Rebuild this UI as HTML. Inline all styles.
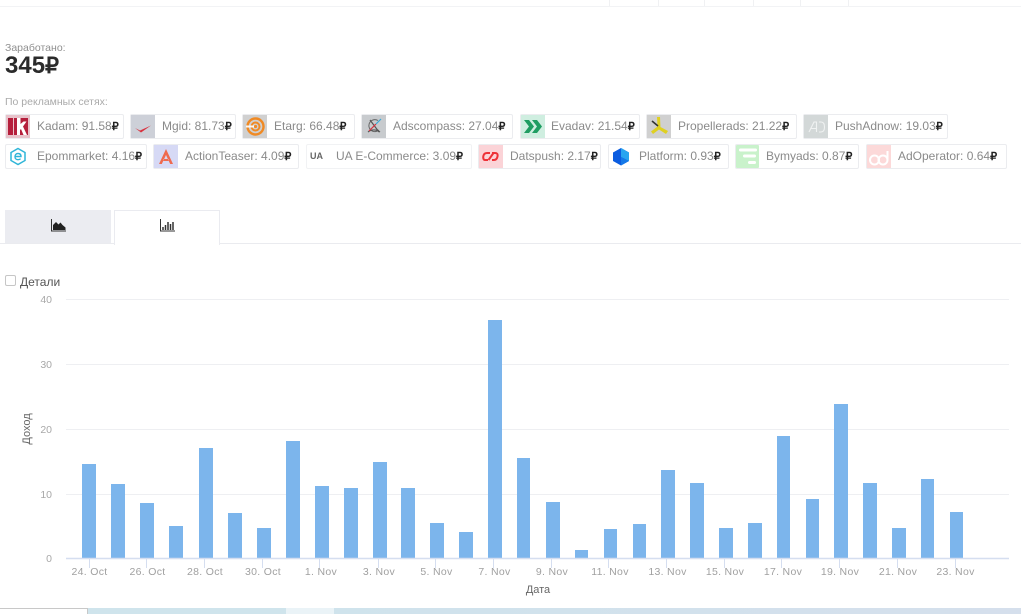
<!DOCTYPE html>
<html><head><meta charset="utf-8"><style>
html,body{margin:0;padding:0;background:#fff}
body{width:1021px;height:614px;position:relative;overflow:hidden;font-family:"Liberation Sans",sans-serif}
.a{position:absolute;white-space:nowrap}
.chip{position:absolute;height:23px;border:1px solid #ebecef;border-radius:2px;background:#fff;box-sizing:content-box}
.chip svg{position:absolute;left:0;top:0;width:24px;height:23px}
.chip span{position:absolute;left:31px;top:3.500px;font-size:12px;line-height:15px;color:#8a8a8a;white-space:nowrap}
.chip b{color:#222;font-size:11px;font-weight:bold}
.t{position:absolute;top:0;width:1px;height:6px;background:#f0f1f3}
</style></head><body>
<div class="a" style="left:0;top:6px;width:1021px;height:1px;background:#f2f3f5"></div>
<div class="t" style="left:609px"></div><div class="t" style="left:658px"></div><div class="t" style="left:704px"></div><div class="t" style="left:753px"></div><div class="t" style="left:800px"></div><div class="t" style="left:848px"></div>

<div class="a" style="left:5px;top:42px;font-size:10.500px;line-height:13px;color:#8f8f8f">Заработано:</div>
<div class="a" style="left:5px;top:53px;font-size:24px;line-height:25px;font-weight:bold;color:#2b2b2b">345<span style="font-size:22px">₽</span></div>
<div class="a" style="left:5px;top:96px;font-size:10.500px;line-height:13px;color:#aaaaaa">По рекламных сетях:</div>

<div class="chip" style="left:5px;top:114px;width:117px"><svg viewBox="0 0 24 23"><rect width="24" height="23" fill="#e8c3cb"/><rect x="2" y="3" width="5" height="17" fill="#b51f3c"/><rect x="8" y="3" width="14" height="17" fill="#b51f3c"/><path d="M11 3h3.500v6l3-2.500h3l-3.500 5 4 8.500h-3.500l-2.500-6-1 1v5h-3z" fill="#fff"/></svg><span>Kadam: 91.58<b>₽</b></span></div>
<div class="chip" style="left:130px;top:114px;width:104px"><svg viewBox="0 0 24 23"><rect width="24" height="23" fill="#cdd0d8"/><path d="M4 13l5 2.500 11-5-10 7z" fill="#d8323f"/></svg><span>Mgid: 81.73<b>₽</b></span></div>
<div class="chip" style="left:242px;top:114px;width:111px"><svg viewBox="0 0 24 23"><rect width="24" height="23" fill="#d0d0d0"/><circle cx="12.500" cy="11.500" r="8" fill="none" stroke="#f08a24" stroke-width="2.400"/><circle cx="12.500" cy="11.500" r="4" fill="none" stroke="#f08a24" stroke-width="2"/><circle cx="12.500" cy="11.500" r="1.600" fill="#f08a24"/><path d="M3 10.500h8v2H3z" fill="#fff" opacity=".9"/></svg><span>Etarg: 66.48<b>₽</b></span></div>
<div class="chip" style="left:361px;top:114px;width:150px"><svg viewBox="0 0 24 23"><rect width="24" height="23" fill="#c8cbce"/><path d="M16 5.500A6 6 0 1 0 17 15" fill="none" stroke="#666" stroke-width="1"/><path d="M8 5l9 12M6 17c3-2.500 8-3 12 0" fill="none" stroke="#555" stroke-width="1.200"/><path d="M7 16l7-7" stroke="#d8323f" stroke-width="1.200"/><path d="M14 9l5-5" stroke="#37a9d8" stroke-width="1.200"/></svg><span>Adscompass: 27.04<b>₽</b></span></div>
<div class="chip" style="left:520px;top:114px;width:118px"><svg viewBox="0 0 24 23"><rect width="24" height="23" fill="#cfeee0"/><path d="M3 5h5l5 6.500-5 6.500H3l5-6.500zM11 5h5l5 6.500-5 6.500h-5l5-6.500z" fill="#1f9d62"/></svg><span style="left:30px">Evadav: 21.54<b>₽</b></span></div>
<div class="chip" style="left:646px;top:114px;width:149px"><svg viewBox="0 0 24 23"><rect width="24" height="23" fill="#d0d0d0"/><path d="M10 2h3l.500 10 7.500 4-2 3-7-4.500-6 4.500-2-2.500 6.500-5z" fill="#dfd020"/><path d="M5 6l6 5" stroke="#333" stroke-width="1.600"/></svg><span>Propellerads: 21.22<b>₽</b></span></div>
<div class="chip" style="left:803px;top:114px;width:143px"><svg viewBox="0 0 24 23"><rect width="24" height="23" fill="#d3d8d8"/><path d="M5 17l5-10h2.500v10M7 13.500h5.500M15 7h2c2.500 0 3.500 2 3.500 5s-1 5-3.500 5h-2" fill="none" stroke="#f0f2f2" stroke-width="1.100"/></svg><span>PushAdnow: 19.03<b>₽</b></span></div>

<div class="chip" style="left:5px;top:144px;width:140px"><svg viewBox="0 0 24 23"><path d="M12 3.500l7 4v8l-7 4-7-4v-8z" fill="none" stroke="#2fb5d8" stroke-width="1.500"/><path d="M9 11.500h6c0-2-1.200-3-3-3s-3 1.300-3 3.200 1.300 3 3 3c1 0 2-.3 2.600-1" fill="none" stroke="#2fb5d8" stroke-width="1.400"/></svg><span>Epommarket: 4.16<b>₽</b></span></div>
<div class="chip" style="left:153px;top:144px;width:144px"><svg viewBox="0 0 24 23"><rect width="24" height="23" fill="#d6d9f5"/><path d="M12 4L5 19h2.800L12 10l4.200 9H19zM9.500 14h5v2h-5z" fill="#ef6a4f"/></svg><span>ActionTeaser: 4.09<b>₽</b></span></div>
<div class="chip" style="left:306px;top:144px;width:164px;border-color:#f1f2f4"><div class="a" style="left:3px;top:5px;font-size:9px;line-height:12px;font-weight:bold;color:#666">UA</div><span style="left:29px">UA E-Commerce: 3.09<b>₽</b></span></div>
<div class="chip" style="left:478px;top:144px;width:121px"><svg viewBox="0 0 24 23"><rect width="24" height="23" fill="#fbd3d7"/><path d="M11 8H8C6 8 5 9 4.500 10.500S4 15 6 15h3M13 8h3c2 0 3 1 2.500 3.500S17 15 15 15h-2" fill="none" stroke="#ee3238" stroke-width="2"/><path d="M9.500 15l5-7" stroke="#ee3238" stroke-width="2"/></svg><span>Datspush: 2.17<b>₽</b></span></div>
<div class="chip" style="left:608px;top:144px;width:119px"><svg viewBox="0 0 24 23"><path d="M12 3l8 4.500v8.500l-8 4.500-8-4.500V7.500z" fill="#0b5ce0"/><path d="M12 3l8 4.500v8.500l-8-4z" fill="#27a5f0"/><path d="M12 12l8 4-8 4.500z" fill="#1479e8"/></svg><span style="left:30px">Platform: 0.93<b>₽</b></span></div>
<div class="chip" style="left:735px;top:144px;width:122px"><svg viewBox="0 0 24 23"><rect width="23" height="23" rx="1" fill="#c9f2cb"/><rect x="3" y="3.500" width="18" height="3" rx="1.500" fill="#fff"/><rect x="7" y="9.500" width="13" height="3" rx="1.500" fill="#fff"/><rect x="12" y="16" width="8" height="3" rx="1.500" fill="#fff"/></svg><span style="left:30px">Bymyads: 0.87<b>₽</b></span></div>
<div class="chip" style="left:866px;top:144px;width:139px"><svg viewBox="0 0 24 23"><rect width="24" height="23" fill="#fcd9d9"/><circle cx="7.500" cy="15" r="4.500" fill="none" stroke="#fff" stroke-width="2"/><circle cx="16" cy="15" r="4.500" fill="none" stroke="#fff" stroke-width="2"/><path d="M20.500 15V6" stroke="#fff" stroke-width="2"/></svg><span>AdOperator: 0.64<b>₽</b></span></div>

<div class="a" style="left:5px;top:210px;width:106px;height:33px;background:#ebecf1"></div>
<div class="a" style="left:0;top:243px;width:1021px;height:1px;background:#eaebef"></div>
<div class="a" style="left:114px;top:210px;width:104px;height:34px;background:#fff;border:1px solid #eaebf0;border-bottom:0"></div>
<svg class="a" style="left:51px;top:219px" width="15" height="13" viewBox="0 0 15 13"><path d="M.5 0v12H15" fill="none" stroke="#333" stroke-width="1"/><path d="M2 11V6l3-3 2.500 2.500 2-2 2 2.500 3 2.500V11z" fill="#222"/></svg>
<svg class="a" style="left:160px;top:219px" width="15" height="13" viewBox="0 0 15 13"><path d="M.5 0v12H15" fill="none" stroke="#333" stroke-width="1"/><path d="M3 11V8M5.500 11V6M8 11V3M10.500 11V5M13 11V3" stroke="#333" stroke-width="1.500"/></svg>

<div class="a" style="left:5px;top:275px;width:9px;height:9px;border:1px solid #c6c6c6;border-radius:2px;background:#fff"></div>
<div class="a" style="left:20px;top:275px;font-size:12px;line-height:15px;color:#555">Детали</div>

<svg class="a" style="left:0;top:0" width="1021" height="614" viewBox="0 0 1021 614" font-family="Liberation Sans, sans-serif">
<g stroke="#eeeff2" stroke-width="1"><path d="M66 299.500H1009M66 364.500H1009M66 429.500H1009M66 494.500H1009"/></g>
<g fill="#7cb5ec">
<rect x="82" y="464" width="14" height="94"/><rect x="111" y="484" width="14" height="74"/><rect x="140" y="503" width="14" height="55"/><rect x="169" y="526" width="14" height="32"/><rect x="199" y="448" width="14" height="110"/><rect x="228" y="513" width="14" height="45"/><rect x="257" y="528" width="14" height="30"/><rect x="286" y="441" width="14" height="117"/><rect x="315" y="486" width="14" height="72"/><rect x="344" y="488" width="14" height="70"/><rect x="373" y="462" width="14" height="96"/><rect x="401" y="488" width="14" height="70"/><rect x="430" y="523" width="14" height="35"/><rect x="459" y="532" width="14" height="26"/><rect x="488" y="320" width="14" height="238"/><rect x="517" y="458" width="13" height="100"/><rect x="546" y="502" width="14" height="56"/><rect x="575" y="550" width="13" height="8"/><rect x="604" y="529" width="13" height="29"/><rect x="633" y="524" width="13" height="34"/><rect x="661" y="470" width="14" height="88"/><rect x="690" y="483" width="14" height="75"/><rect x="719" y="528" width="14" height="30"/><rect x="748" y="523" width="14" height="35"/><rect x="777" y="436" width="13" height="122"/><rect x="806" y="499" width="13" height="59"/><rect x="834" y="404" width="14" height="154"/><rect x="863" y="483" width="14" height="75"/><rect x="892" y="528" width="14" height="30"/><rect x="921" y="479" width="13" height="79"/><rect x="950" y="512" width="13" height="46"/>
</g>
<path d="M66 558.500H1009" stroke="#d5def0" stroke-width="1.500"/>
<g stroke="#d5def0" stroke-width="1"><path d="M89.500 558v10M146.500 558v10M204.500 558v10M262.500 558v10M319.500 558v10M378.500 558v10M435.500 558v10M493.500 558v10M551.500 558v10M608.500 558v10M666.500 558v10M724.500 558v10M781.500 558v10M839.500 558v10M897.500 558v10M955.500 558v10"/></g>
<g fill="#a8a8a8" font-size="10.500" text-anchor="end"><text x="52" y="303">40</text><text x="52" y="368">30</text><text x="52" y="433">20</text><text x="52" y="498">10</text><text x="52" y="562">0</text></g>
<g fill="#a0a0a0" font-size="10.500" text-anchor="middle" letter-spacing=".3">
<text x="89.500" y="575">24. Oct</text><text x="147.500" y="575">26. Oct</text><text x="205" y="575">28. Oct</text><text x="263" y="575">30. Oct</text><text x="321" y="575">1. Nov</text><text x="379" y="575">3. Nov</text><text x="436.500" y="575">5. Nov</text><text x="494.500" y="575">7. Nov</text><text x="552" y="575">9. Nov</text><text x="610" y="575">11. Nov</text><text x="667.500" y="575">13. Nov</text><text x="725" y="575">15. Nov</text><text x="783" y="575">17. Nov</text><text x="840" y="575">19. Nov</text><text x="898" y="575">21. Nov</text><text x="955.500" y="575">23. Nov</text>
</g>
<text x="538" y="593" fill="#666" font-size="11" text-anchor="middle">Дата</text>
<text transform="translate(30 429) rotate(-90)" fill="#666" font-size="11" text-anchor="middle">Доход</text>
</svg>

<div class="a" style="left:0;top:608px;width:87px;height:5px;border-top:1px solid #c8c8c8;border-right:1px solid #c8c8c8"></div>
<div class="a" style="left:88px;top:608px;width:198px;height:6px;background:#cfe4ec"></div>
<div class="a" style="left:286px;top:608px;width:48px;height:6px;background:#eaf3f7"></div>
<div class="a" style="left:334px;top:608px;width:687px;height:6px;background:linear-gradient(90deg,#cfe3ec,#d5dfec)"></div>
</body></html>
